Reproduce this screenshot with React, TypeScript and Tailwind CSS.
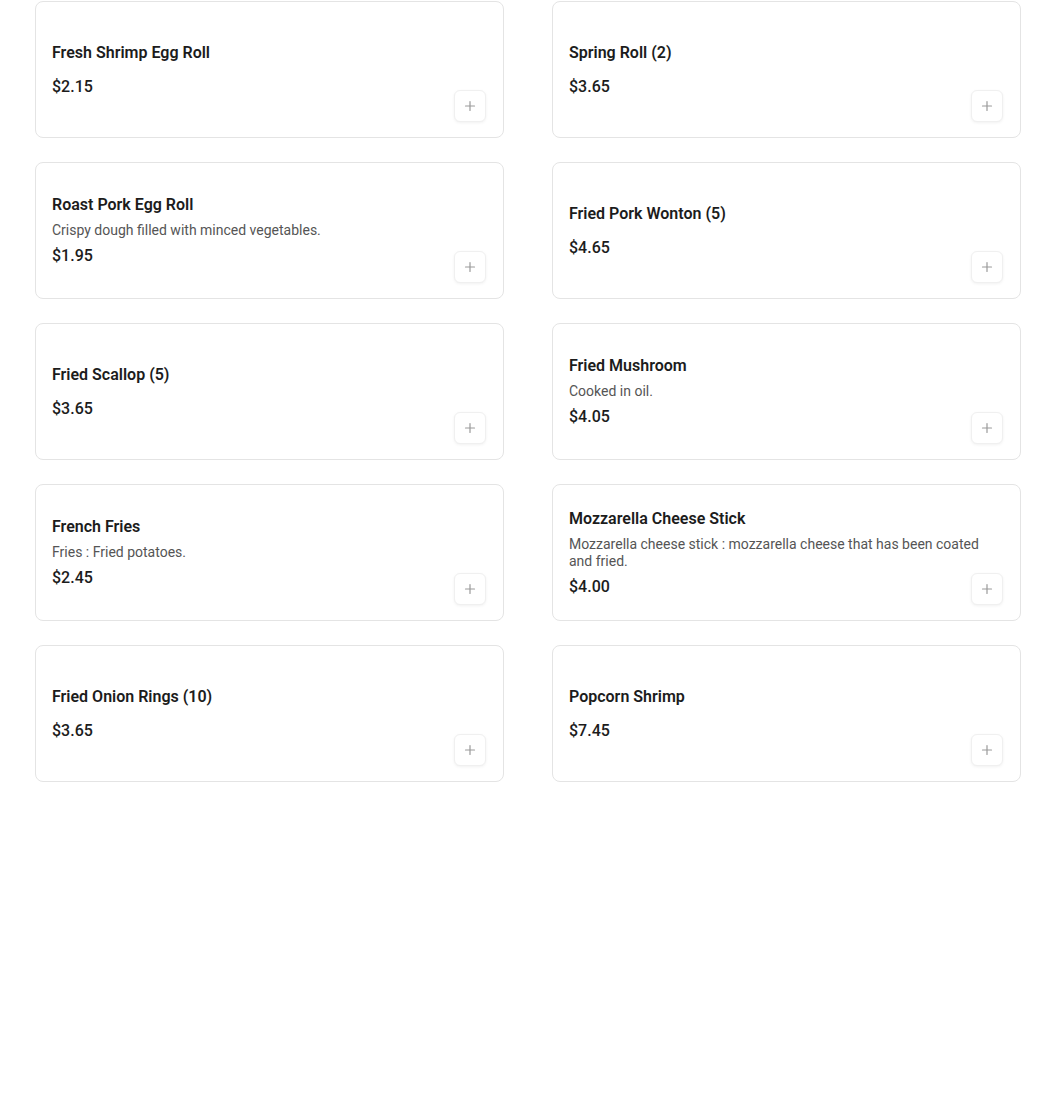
import React from "react";

type Item = { name: string; desc?: string; price: string };

const items: Item[] = [
  { name: "Fresh Shrimp Egg Roll", price: "$2.15" },
  { name: "Spring Roll (2)", price: "$3.65" },
  { name: "Roast Pork Egg Roll", desc: "Crispy dough filled with minced vegetables.", price: "$1.95" },
  { name: "Fried Pork Wonton (5)", price: "$4.65" },
  { name: "Fried Scallop (5)", price: "$3.65" },
  { name: "Fried Mushroom", desc: "Cooked in oil.", price: "$4.05" },
  { name: "French Fries", desc: "Fries : Fried potatoes.", price: "$2.45" },
  {
    name: "Mozzarella Cheese Stick",
    desc: "Mozzarella cheese stick : mozzarella cheese that has been coated and fried.",
    price: "$4.00",
  },
  { name: "Fried Onion Rings (10)", price: "$3.65" },
  { name: "Popcorn Shrimp", price: "$7.45" },
];

function Card({ item }: { item: Item }) {
  return (
    <div className="relative flex h-[137px] flex-col justify-center rounded-lg border border-[#e4e4e4] bg-white px-4">
      <div className="flex flex-col gap-[5px]">
        <div className="text-[16px] font-semibold leading-6 text-[#1c1c1c]">{item.name}</div>
        {item.desc ? (
          <div className="text-[14px] leading-[17px] text-[#555555]">{item.desc}</div>
        ) : (
          <div className="h-0" />
        )}
        <div className="text-[16px] font-medium leading-6 text-[#1c1c1c]">{item.price}</div>
      </div>
      <button className="absolute bottom-[15px] right-[17px] flex h-[32px] w-[32px] items-center justify-center rounded-md border border-[#f0f0f0] bg-white shadow-[0_1px_3px_rgba(0,0,0,0.06)]">
        <svg width="12" height="12" viewBox="0 0 12 12" fill="none">
          <path d="M6 1.5v9M1.5 6h9" stroke="#9a9a9a" strokeWidth="1.2" strokeLinecap="round" />
        </svg>
      </button>
    </div>
  );
}

export default function App() {
  return (
    <div
      className="min-h-[1113px] bg-white pl-[35px] pt-px"
      style={{ fontFamily: "Roboto, 'Liberation Sans', sans-serif" }}
    >
      <div className="grid grid-cols-[469px_469px] gap-x-12 gap-y-6">
        {items.map((it) => (
          <Card key={it.name} item={it} />
        ))}
      </div>
    </div>
  );
}
